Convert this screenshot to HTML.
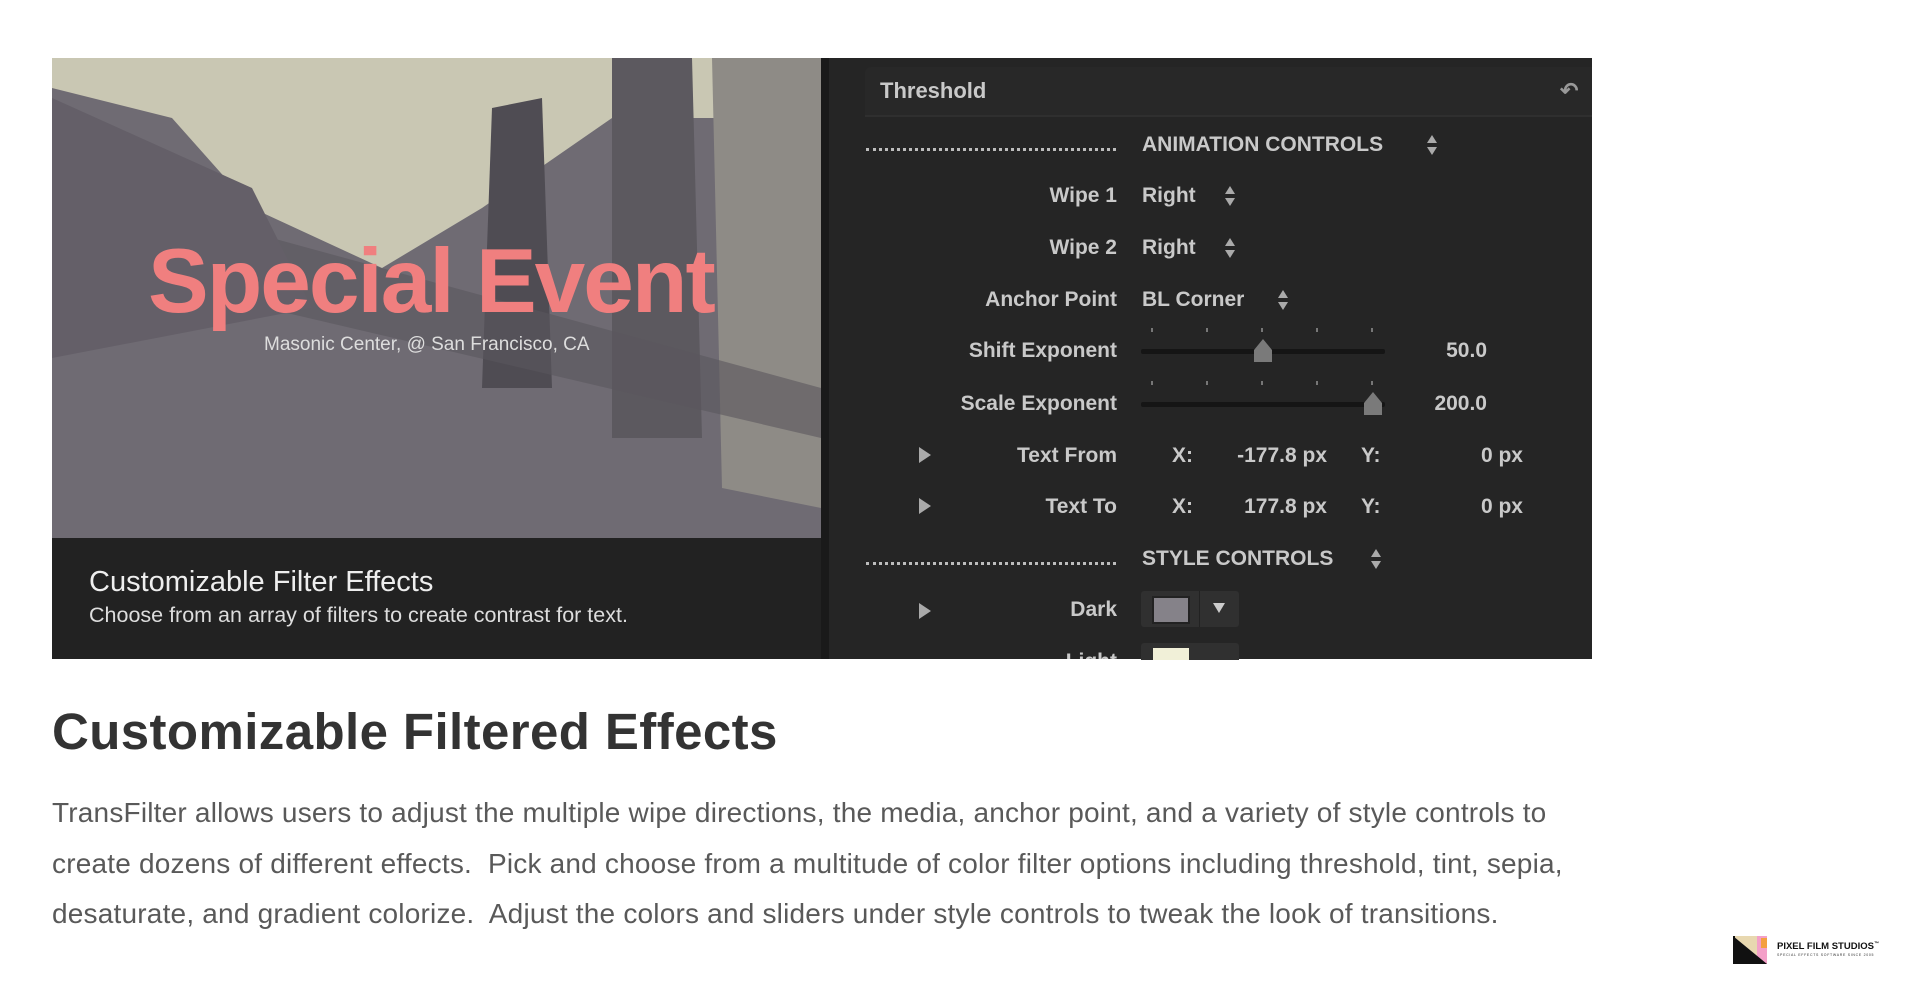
<!DOCTYPE html>
<html><head><meta charset="utf-8"><style>
*{margin:0;padding:0;box-sizing:border-box}
body{width:1916px;height:994px;background:#fff;position:relative;overflow:hidden;font-family:"Liberation Sans",sans-serif}
.a{position:absolute;white-space:nowrap}
.pt{color:#c9c9c9;font-size:21px;font-weight:bold;line-height:24px}
.r{text-align:right}
.dots{position:absolute;left:866px;width:250px;border-top:3px dotted #bdbdbd;height:0}
</style></head><body>

<div class="a" style="left:52px;top:58px;width:769px;height:480px;background:#6f6b73;overflow:hidden">
<svg width="769" height="480" style="position:absolute;left:0;top:0">
<polygon points="0,0 769,0 769,60 560,60 430,150 330,210 200,150 120,60 0,30" fill="#c9c7b3"/>
<polygon points="440,50 490,40 500,330 430,330" fill="#4f4c53"/>
<polygon points="560,0 640,0 650,380 560,380" fill="#5c595f"/>
<polygon points="660,0 769,0 769,450 670,430" fill="#8e8b86"/>
<polygon points="0,120 769,330 769,380 0,200" fill="#5a565e" opacity=".6"/>
<polygon points="0,40 200,130 260,250 0,300" fill="#645f68"/>
</svg>
<div class="a" style="left:96px;top:174px;font-size:91px;font-weight:bold;color:#f07f7f;letter-spacing:-2px;line-height:100px">Special Event</div>
<div class="a" style="left:212px;top:276px;font-size:19px;color:#ddd;line-height:22px">Masonic Center, @ San Francisco, CA</div>
</div>
<div class="a" style="left:52px;top:538px;width:769px;height:121px;background:#222"></div>
<div class="a" style="left:89px;top:566px;font-size:29px;color:#eee;line-height:32px">Customizable Filter Effects</div>
<div class="a" style="left:89px;top:603px;font-size:21.5px;color:#ddd;line-height:24px">Choose from an array of filters to create contrast for text.</div>

<div class="a" style="left:821px;top:58px;width:771px;height:601px;background:#252525;overflow:hidden">
<div class="a" style="left:0;top:0;width:8px;height:601px;background:#1a1a1a"></div>
<div class="a" style="left:44px;top:9px;width:727px;height:50px;background:#282828;border-bottom:2px solid #2f2f2f;border-radius:6px 0 0 0"></div>
</div>
<div class="a pt" style="left:880px;top:79px;font-size:22px">Threshold</div>
<div class="a" style="left:1560px;top:78px;color:#999;font-size:22px;font-weight:bold">↶</div>

<div class="dots" style="top:148px"></div>
<div class="a pt" style="left:1142px;top:133px">ANIMATION CONTROLS</div>
<div class="a pt r" style="left:895px;width:222px;top:184px">Wipe 1</div>
<div class="a pt" style="left:1142px;top:184px">Right</div>
<div class="a pt r" style="left:895px;width:222px;top:236px">Wipe 2</div>
<div class="a pt" style="left:1142px;top:236px">Right</div>
<div class="a pt r" style="left:895px;width:222px;top:288px">Anchor Point</div>
<div class="a pt" style="left:1142px;top:288px">BL Corner</div>
<div class="a pt r" style="left:895px;width:222px;top:339px">Shift Exponent</div>
<div class="a pt r" style="left:895px;width:222px;top:392px">Scale Exponent</div>
<div class="a pt r" style="left:1395px;width:92px;top:339px">50.0</div>
<div class="a pt r" style="left:1395px;width:92px;top:392px">200.0</div>
<div class="a pt r" style="left:895px;width:222px;top:444px">Text From</div>
<div class="a pt r" style="left:895px;width:222px;top:495px">Text To</div>
<div class="a pt" style="left:1172px;top:444px">X:</div>
<div class="a pt" style="left:1172px;top:495px">X:</div>
<div class="a pt r" style="left:1195px;width:132px;top:444px">-177.8 px</div>
<div class="a pt r" style="left:1195px;width:132px;top:495px">177.8 px</div>
<div class="a pt" style="left:1361px;top:444px">Y:</div>
<div class="a pt" style="left:1361px;top:495px">Y:</div>
<div class="a pt r" style="left:1435px;width:88px;top:444px">0 px</div>
<div class="a pt r" style="left:1435px;width:88px;top:495px">0 px</div>
<div class="dots" style="top:562px"></div>
<div class="a pt" style="left:1142px;top:547px">STYLE CONTROLS</div>
<div class="a pt r" style="left:895px;width:222px;top:598px">Dark</div>
<div class="a pt r" style="left:895px;width:222px;top:650px;height:9px;overflow:hidden">Light</div>

<svg class="a" style="left:-5px;top:0" width="1916" height="660">
<g fill="#aaa">
<polygon points="1432,143 1442,143 1437,135"/><polygon points="1432,147 1442,147 1437,155"/>
<polygon points="1230,194 1240,194 1235,186"/><polygon points="1230,198 1240,198 1235,206"/>
<polygon points="1230,246 1240,246 1235,238"/><polygon points="1230,250 1240,250 1235,258"/>
<polygon points="1283,298 1293,298 1288,290"/><polygon points="1283,302 1293,302 1288,310"/>
<polygon points="1376,557 1386,557 1381,549"/><polygon points="1376,561 1386,561 1381,569"/>
<polygon points="924,447 936,455 924,463"/><polygon points="924,498 936,506 924,514"/>
<polygon points="924,603 936,611 924,619"/>
</g>
<g fill="#777">
<rect x="1156" y="328" width="2" height="4"/><rect x="1211" y="328" width="2" height="4"/><rect x="1266" y="328" width="2" height="4"/><rect x="1321" y="328" width="2" height="4"/><rect x="1376" y="328" width="2" height="4"/>
<rect x="1156" y="381" width="2" height="4"/><rect x="1211" y="381" width="2" height="4"/><rect x="1266" y="381" width="2" height="4"/><rect x="1321" y="381" width="2" height="4"/><rect x="1376" y="381" width="2" height="4"/>
</g>
<rect x="1146" y="349" width="244" height="5" rx="2" fill="#151515"/>
<rect x="1146" y="402" width="244" height="5" rx="2" fill="#151515"/>
<path d="M1259,362 L1259,350 L1268,339 L1277,350 L1277,362 Z" fill="#7a7a7a"/>
<path d="M1369,415 L1369,403 L1378,392 L1387,403 L1387,415 Z" fill="#7a7a7a"/>
<rect x="1146" y="591" width="98" height="36" rx="3" fill="#303030"/>
<rect x="1158" y="597" width="36" height="26" fill="#858289" stroke="#222" stroke-width="2"/>
<rect x="1204" y="591" width="1" height="36" fill="#222"/>
<polygon points="1218,603 1230,603 1224,613" fill="#ccc"/>
<rect x="1146" y="643" width="98" height="20" rx="3" fill="#303030"/>
<rect x="1158" y="648" width="36" height="14" fill="#f1f0d8"/>
</svg>

<div class="a" style="left:52px;top:702px;font-size:51px;font-weight:bold;color:#333;line-height:60px;letter-spacing:.4px">Customizable Filtered Effects</div>
<div class="a" style="left:52px;top:788px;font-size:28px;color:#595959;line-height:50.5px;white-space:normal;width:1700px;letter-spacing:.2px">TransFilter allows users to adjust the multiple wipe directions, the media, anchor point, and a variety of style controls to<br>create dozens of different effects.&nbsp; Pick and choose from a multitude of color filter options including threshold, tint, sepia,<br>desaturate, and gradient colorize.&nbsp; Adjust the colors and sliders under style controls to tweak the look of transitions.</div>

<svg class="a" style="left:1731px;top:934px" width="40" height="33">
<rect x="0" y="0" width="38" height="32" fill="#fff"/>
<polygon points="2,2 36,2 36,30" fill="#e8d8b0"/>
<rect x="26" y="2" width="10" height="28" fill="#f3a0c8"/>
<rect x="30" y="4" width="6" height="10" fill="#f4a040"/>
<polygon points="2,2 36,30 2,30" fill="#111"/>
<rect x="2" y="2" width="2" height="28" fill="#111"/>
</svg>
<div class="a" style="left:1777px;top:941px;font-size:9.5px;font-weight:bold;color:#111">PIXEL FILM STUDIOS<sup style="font-size:5px">™</sup></div>
<div class="a" style="left:1777px;top:953px;font-size:3.5px;color:#333;letter-spacing:.7px">SPECIAL EFFECTS SOFTWARE SINCE 2005</div>
</body></html>
